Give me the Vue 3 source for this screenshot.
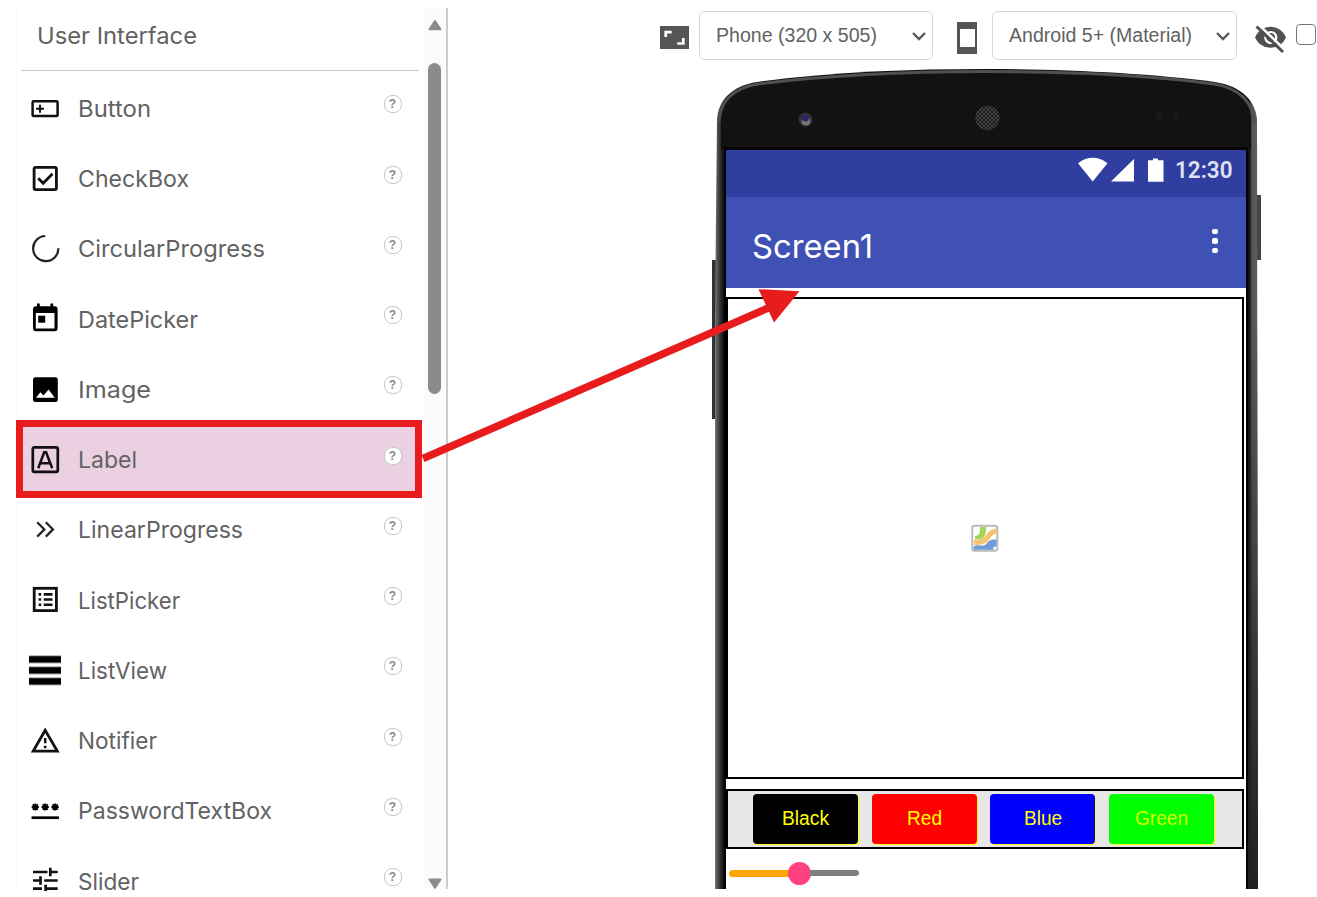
<script setup>
import { h } from 'vue'

// One line of text, spaced to an exact width
const FitText = (props) =>
  h(
    'svg',
    { width: props.w, height: props.size * 1.5, style: { overflow: 'visible', display: 'block', flex: 'none' } },
    [h('text', { x: 0, y: props.size * 1.1, 'font-size': props.size, textLength: props.w, lengthAdjust: 'spacingAndGlyphs', fill: 'currentColor' }, props.text)]
  )
FitText.props = ['text', 'w', 'size']

const items = [
  { name: 'Button', w: 73 },
  { name: 'CheckBox', w: 111 },
  { name: 'CircularProgress', w: 187 },
  { name: 'DatePicker', w: 120 },
  { name: 'Image', w: 73 },
  { name: 'Label', w: 59, selected: true },
  { name: 'LinearProgress', w: 165 },
  { name: 'ListPicker', w: 102 },
  { name: 'ListView', w: 89 },
  { name: 'Notifier', w: 79 },
  { name: 'PasswordTextBox', w: 194 },
  { name: 'Slider', w: 61 },
]

const colors = [
  { name: 'Black', key: 'black', w: 47 },
  { name: 'Red', key: 'red', w: 35 },
  { name: 'Blue', key: 'blue', w: 38 },
  { name: 'Green', key: 'green', w: 53 },
]
</script>

<template>
  <main class="page">
    <aside class="palette">
      <div class="list">
        <h2 class="heading"><FitText text="User Interface" :w="160" :size="23" /></h2>
        <ul class="rows">
          <li v-for="it in items" :key="it.name" class="row" :class="{ selected: it.selected }">
            <svg class="icon" viewBox="0 0 32 32" width="32" height="32">
              <g v-if="it.name === 'Button'" fill="none" stroke="#111" stroke-width="2.5">
                <rect x="3.6" y="8.3" width="25" height="14.8" rx="1.2" />
                <path d="M7 15.7h8M11 11.7v8" stroke-width="2" />
              </g>
              <g v-else-if="it.name === 'CheckBox'" fill="none" stroke="#111" stroke-width="2.8">
                <rect x="5.1" y="4.3" width="22.3" height="22.3" rx="1.5" />
                <path d="M9.2 15.3l5 5L23.5 10.8" />
              </g>
              <path v-else-if="it.name === 'CircularProgress'" d="M16.2 3A12.6 12.6 0 1 0 29.3 15.2" fill="none" stroke="#222" stroke-width="2.2" />
              <g v-else-if="it.name === 'DatePicker'">
                <path fill-rule="evenodd" d="M8 .5h2.8v2.7h10.6V.5h2.8v2.7h1.4a3 3 0 0 1 3 3v19a3 3 0 0 1-3 3H7a3 3 0 0 1-3-3v-19a3 3 0 0 1 3-3h1zM6.8 10.1v15.4h18.7V10.1z" />
                <path d="M9.2 12.7h7v7h-7z" />
              </g>
              <g v-else-if="it.name === 'Image'">
                <rect x="4" y="3.3" width="24.8" height="24.8" rx="2.5" />
                <path d="M7 23.8l4.3-5.6 3.2 3.4 5.1-6 6.1 8.2z" fill="#fff" />
              </g>
              <g v-else-if="it.name === 'Label'" fill="none" stroke="#111" stroke-width="2.7">
                <rect x="3.8" y="3.3" width="25" height="24.6" rx="1.6" />
                <path d="M9.2 24.2L15.2 8.3h1.9L23.2 24.2M11.2 19.2h10" stroke-width="2.5" />
              </g>
              <path v-else-if="it.name === 'LinearProgress'" d="M8.2 8.2l7.2 7.2-7.2 7.2M16.8 8.2l7.2 7.2-7.2 7.2" fill="none" stroke="#222" stroke-width="2.200" />
              <g v-else-if="it.name === 'ListPicker'" fill="none" stroke="#111">
                <rect x="5.2" y="4.3" width="22.2" height="22.3" stroke-width="2.8" />
                <path d="M9.6 10.4h2.6m2.5 0h8.8M9.6 15.5h2.6m2.5 0h8.8M9.6 20.7h2.6m2.5 0h8.8" stroke-width="2.6" />
              </g>
              <g v-else-if="it.name === 'ListView'">
                <path fill="#aaa" d="M0 .2h32v8.4H0zM0 11.2h32v8.4H0zM0 22.2h32v8.4H0z" />
                <path d="M0 1.2h32v6.2H0zM0 12.2h32v6.2H0zM0 23.2h32v6.2H0z" />
              </g>
              <g v-else-if="it.name === 'Notifier'" fill="none" stroke="#111">
                <path d="M16.2 5.200L4.200 26.100h24.100z" stroke-width="2.800" />
                <path d="M16.2 13v5.300M16.2 20.700v2.600" stroke-width="2.500" />
              </g>
              <g v-else-if="it.name === 'PasswordTextBox'" fill="none" stroke="#000">
                <path d="M2.700 12h7.200M6.300 8.400v7.200M3.700 9.400l5.200 5.200m0-5.200l-5.200 5.200M12.600 12h7.200M16.200 8.400v7.200M13.600 9.400l5.200 5.200m0-5.200l-5.200 5.200M22.500 12h7.200M26.100 8.400v7.200M23.500 9.400l5.200 5.200m0-5.200l-5.200 5.200" stroke-width="1.800" />
                <path d="M2.500 22.700h27.400" stroke-width="2.700" />
              </g>
              <path v-else d="M4 7h14.500M21.300 2.700v8.600M21.300 7h7.400M4 15.500h8M11.500 11.200v8.600M15.200 15.500h13.500M4 23.700h9M16.600 19.800v9M16.600 23.700h12.100" fill="none" stroke="#111" stroke-width="2.700" />
            </svg>
            <FitText class="name" :text="it.name" :w="it.w" :size="23" />
            <span class="help">?</span>
          </li>
        </ul>
      </div>
      <div class="scrollbar">
        <svg width="16" height="12"><path d="M2.500 10.200L8 2l5.500 8.200z" fill="#8b8b8b" stroke="#8b8b8b" stroke-width="2" stroke-linejoin="round" /></svg>
        <div class="thumb"></div>
        <svg class="down" width="16" height="12"><path d="M2.500 2.500h11L8 10.700z" fill="#8b8b8b" stroke="#8b8b8b" stroke-width="2" stroke-linejoin="round" /></svg>
      </div>
    </aside>

    <section class="viewer">
      <div class="toolbar">
        <svg class="resize" width="29" height="24"><path fill="#555" d="M0 0h29v23H0z" /><path d="M5.700 11V6.200h6M23.300 12v5.500h-6" fill="none" stroke="#fff" stroke-width="2.700" /></svg>
        <div class="select size">
          <FitText text="Phone (320 x 505)" :w="161" :size="19.500" />
          <svg width="16" height="12"><path d="M2 3l6 6 6-6" fill="none" stroke="#555" stroke-width="2.300" /></svg>
        </div>
        <svg class="device" width="21" height="32"><path fill="#555" fill-rule="evenodd" d="M0 0h20v32H0zM3 7v18h15V7z" /></svg>
        <div class="select theme">
          <FitText text="Android 5+ (Material)" :w="183" :size="19.500" />
          <svg width="16" height="12"><path d="M2 3l6 6 6-6" fill="none" stroke="#555" stroke-width="2.300" /></svg>
        </div>
        <svg class="eye" width="32" height="30" viewBox="0 0 32 30">
          <path d="M0 13.500C6-1 25-1 31 13.500C25 27 6 27 0 13.500z" fill="#505050" />
          <circle cx="15.800" cy="13.500" r="5.500" fill="none" stroke="#fff" stroke-width="2.200" />
          <path d="M3.500.500L30 26" stroke="#fff" stroke-width="2.600" />
          <path d="M1.500 2.500L28 28" stroke="#505050" stroke-width="3" />
        </svg>
        <span class="checkbox"></span>
      </div>

      <div class="phone">
        <svg class="shell" width="552" height="822" viewBox="0 0 552 822">
          <defs>
            <linearGradient id="edge" gradientUnits="userSpaceOnUse" x1="5" x2="548" y1="0" y2="0">
              <stop offset="0" stop-color="#777" /><stop offset=".005" stop-color="#505050" /><stop offset=".01" stop-color="#303030" /><stop offset=".016" stop-color="#101010" />
              <stop offset=".984" stop-color="#111" /><stop offset=".989" stop-color="#555" /><stop offset="1" stop-color="#606060" />
            </linearGradient>
            <linearGradient id="side" x1="0" x2="0" y1="0" y2="1">
              <stop offset="0" stop-color="#222" stop-opacity="0" /><stop offset="1" stop-color="#202020" />
            </linearGradient>
            <pattern id="mesh" width="4" height="4" patternUnits="userSpaceOnUse"><path d="M0 0l4 4M4 0L0 4" stroke="#484848" stroke-width=".9" /></pattern>
          </defs>
          <path d="M2 192h5v159H2z" fill="#333" />
          <path d="M546 127h5v65h-5z" fill="#444" />
          <path d="M5 822V245L7 52C8 32 22 18 47 14C120 4 200 1 275 1C350 1 440 5 505 14C532 18 546 34 547 52L548 822z" fill="url(#edge)" />
          <path d="M11 82V53C11 34 24 21 48 17C120 8 200 4.500 275 4.500C350 4.500 440 8 503 17C527 21 541 34 541 53V82z" fill="#121212" />
          <path d="M9 54C10 33 23 20 48 16C120 7 200 3.500 275 3.500C350 3.500 440 7 504 16C530 20 543 35 544 54" fill="none" stroke="#505050" stroke-width="3" />
          <path d="M538 250h10v572h-10z" fill="url(#side)" />
          <path d="M14 79h524v743H14z" fill="#020202" />
          <circle cx="95.500" cy="51.500" r="7" fill="#303030" /><circle cx="96" cy="53" r="4.500" fill="#777" /><circle cx="95.500" cy="50" r="3.500" fill="#29276b" />
          <circle cx="277.500" cy="50" r="12.500" fill="#1b1b1b" /><circle cx="277.500" cy="50" r="12" fill="url(#mesh)" />
          <circle cx="449" cy="49" r="4.500" fill="#1b1818" /><circle cx="466" cy="49" r="3.500" fill="#1b1818" />
        </svg>
        <div class="screen">
          <div class="status">
            <svg width="88" height="26" fill="#fff"><path d="M0 6.200Q14.700-4.500 29.500 6.200L14.700 24.500zM33 24.500L56 2v22.500zM70 3.200h5V1.500h5v1.700h5.500v21.500H70z" /></svg>
            <FitText class="clock" text="12:30" :w="57.500" :size="23" />
          </div>
          <div class="appbar">
            <FitText class="title" text="Screen1" :w="121" :size="33" />
            <div class="more"><i></i><i></i><i></i></div>
          </div>
          <div class="canvas">
            <svg width="28" height="28" viewBox="0 0 28 28">
              <rect x="1.300" y="1.800" width="25" height="25" rx="2" fill="#fff" stroke="#bbb" stroke-width="2" />
              <path d="M9 3h6.500c-1 6 0 13-11.500 12.500v-3.500c5 0 5-4 5-9z" fill="#a5d55e" />
              <path d="M25.300 4.500v5.500c-8 0-4 12-22.300 11v-5c14 1 11-11 22.300-11.500z" fill="#f8c471" />
              <path d="M2.500 25.800v-3c5-4 10 1 13-3 2-3 5-5 10-4v7h-3v3z" fill="#6f9bd8" />
            </svg>
          </div>
          <div class="buttons">
            <div v-for="c in colors" :key="c.key" class="color" :class="c.key"><FitText :text="c.name" :w="c.w" :size="19.500" /></div>
          </div>
          <div class="slider"><span class="fill"></span><span class="knob"></span><span class="rest"></span></div>
        </div>
      </div>
    </section>

    <svg class="arrow" width="400" height="190">
      <path d="M3 178.500L355 25" stroke="#e81c1c" stroke-width="7.500" />
      <path d="M338.500 9.200L379.500 11.200L354 42.500z" fill="#e81c1c" />
    </svg>
  </main>
</template>

<style>
body { background: #fff; }
</style>

<style scoped>
.page { position: relative; box-sizing: border-box; width: 1317px; height: 897px; padding: 8px 0; display: flex; overflow: hidden; background: #fff; font-family: "Liberation Sans", sans-serif; color: #626262; }
.palette { box-sizing: border-box; width: 448px; height: 881px; padding-left: 16px; display: flex; border-right: 2px solid #ccc; font-family: Inter, "Open Sans", sans-serif; }
.list { width: 407px; flex: none; border-left: 1px solid #fafafa; box-sizing: border-box; }
.heading { margin: 0 4px 0 4px; height: 63px; padding: 11px 0 0 16px; box-sizing: border-box; border-bottom: 1.500px solid #c8c8c8; font-weight: 400; }
.rows { list-style: none; margin: 2px 0 0; padding: 0; }
.row { position: relative; height: 70.250px; display: flex; align-items: center; padding-left: 12px; }
.icon { flex: none; margin-right: 17px; position: relative; top: .500px; left: -.300px; }
.row:last-child .icon { clip-path: inset(0 0 6.500px 0); }
.name { position: relative; top: 1px; left: -.300px; }
.selected::before { content: ""; position: absolute; left: -1px; top: -4.250px; width: 406px; height: 77.500px; box-sizing: border-box; border: 7px solid #e81c1c; background: #ebd0e2; }
.help { position: absolute; left: 366.500px; top: 22.250px; width: 18px; height: 18px; box-sizing: border-box; border: 1.500px solid #c8c8c8; border-radius: 8px; background: #fff; font: bold 12px/16px "Liberation Sans", sans-serif; color: #888; text-align: center; }
.scrollbar { width: 23px; background: #fbfbfb; display: flex; flex-direction: column; align-items: center; padding: 11px 0 0; box-sizing: border-box; }
.thumb { width: 13px; height: 331px; border-radius: 7px; background: #8b8b8b; margin-top: 32px; }
.down { margin-top: auto; }
.viewer { flex: 1; padding-left: 211.500px; }
.toolbar { height: 60px; display: flex; align-items: flex-start; }
.toolbar > svg { flex: none; }
.resize { margin: 18px 10.500px 0 0; }
.select { box-sizing: border-box; height: 49px; margin-top: 3px; flex: none; border: 1.500px solid #d8d8d8; border-radius: 6px; display: flex; align-items: center; justify-content: space-between; padding: 0 5px 0 16px; color: #626262; }
.size { width: 234px; }
.theme { width: 245px; margin-left: 14px; }
.device { margin: 14px 0 0 24px; }
.eye { margin: 16px 9px 0 18px; }
.checkbox { box-sizing: border-box; width: 20px; height: 21px; margin-top: 16px; border: 1.500px solid #777; border-radius: 4px; flex: none; }
.phone { width: 552px; height: 821px; margin-left: 50.500px; position: relative; overflow: hidden; }
.shell { position: absolute; left: 0; top: 0; }
.screen { position: relative; margin: 82px 0 0 16px; width: 520px; height: 739px; background: #fff; overflow: hidden; }
.status { height: 47px; background: #303e9f; display: flex; padding: 6.500px 0 0 352px; box-sizing: border-box; }
.clock { color: #dfe2f5; margin-left: 9px; margin-top: -3.500px; font-family: Roboto, sans-serif; font-weight: 600; }
.appbar { height: 91px; background: #4051b5; display: flex; justify-content: space-between; align-items: center; padding: 0 28.500px 0 26px; color: #fff; font-family: Inter, sans-serif; }
.title { position: relative; top: 4.500px; }
.more { display: flex; flex-direction: column; gap: 4px; margin-top: -3px; }
.more i { width: 5.500px; height: 5.500px; border-radius: 2px; background: #fff; }
.canvas { box-sizing: border-box; width: 518px; height: 482px; margin-top: 9px; border: 2.500px solid #000; display: flex; align-items: center; justify-content: center; }
.buttons { box-sizing: border-box; width: 518px; height: 60px; margin-top: 10px; border: 2.500px solid #000; background: #e7e7e7; display: flex; gap: 13.600px; padding: 2.500px 0 0 25px; }
.color { width: 105px; height: 50px; flex: none; border-radius: 4px; display: flex; align-items: center; justify-content: center; color: #ff0; box-shadow: 1px 1px 1px #ff0; }
.black { background: #000; }
.red { background: #f00; }
.blue { background: #00f; }
.green { background: #0f0; color: #d4ff00; }
.slider { display: flex; align-items: center; margin: 12px 0 0 2.500px; height: 24px; }
.fill { width: 60px; height: 7px; border-radius: 4px 0 0 4px; background: #ffa500; }
.knob { width: 23px; height: 23px; border-radius: 50%; background: #ff4081; margin: 0 -1px; }
.rest { width: 49px; height: 6px; border-radius: 0 3px 3px 0; background: #808080; }
.arrow { position: absolute; left: 420px; top: 280px; }
</style>
